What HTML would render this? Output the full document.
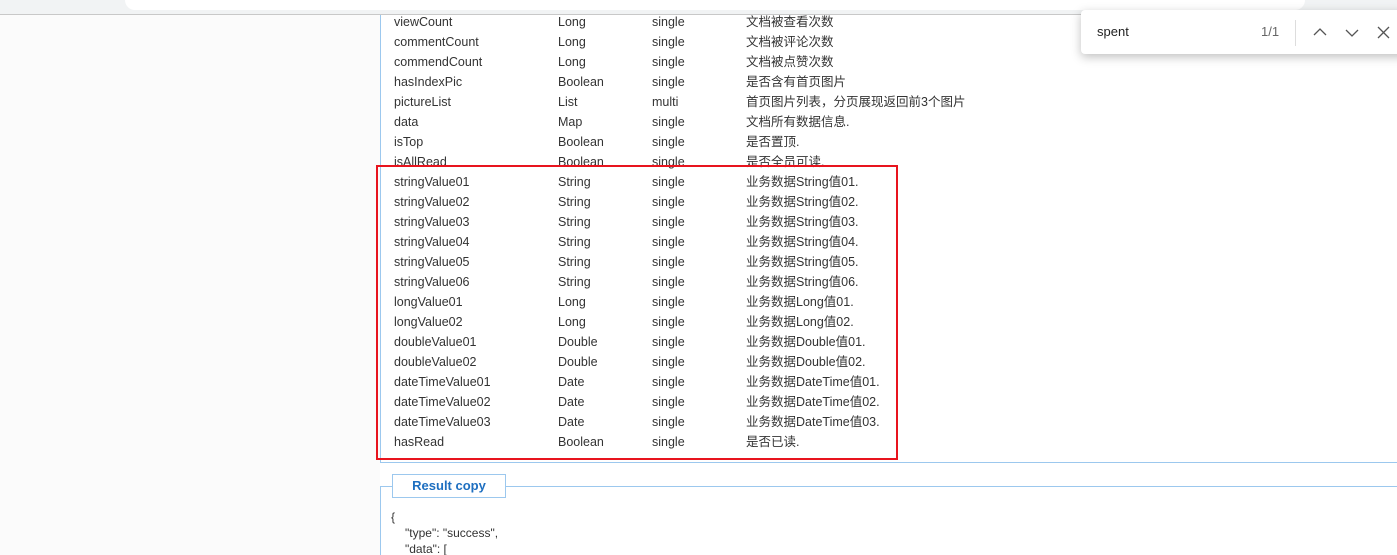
<!DOCTYPE html>
<html><head><meta charset="utf-8"><style>
html,body{margin:0;width:1397px;height:555px;overflow:hidden}
body{background:#fff;font-family:"Liberation Sans","Noto Sans CJK SC",sans-serif;font-size:12.5px;color:#333;position:relative}
.top{position:absolute;left:0;top:0;width:1397px;height:14px;background:#f1f3f4;border-bottom:1px solid #c8c8c8}
.addr{position:absolute;left:125px;top:-10px;width:1180px;height:20px;background:#fff;border-radius:10px}
.left{position:absolute;left:0;top:15px;width:380px;height:540px;background:#fbfbfb}
.panel{position:absolute;left:380px;top:15px;width:1017px;height:447px;border-left:1px solid #9cc8ee;border-bottom:1px solid #9cc8ee}
.row{position:absolute;height:20px;line-height:20px}
.row span{position:absolute;white-space:nowrap}
.red{position:absolute;left:376px;top:165px;width:518px;height:291px;border:2px solid #e8141e}
.res{position:absolute;left:380px;top:486px;width:1017px;height:69px;border-left:1px solid #9cc8ee;border-top:1px solid #9cc8ee}
.btn{position:absolute;left:392px;top:474px;width:112px;height:22px;border:1px solid #9cc8ee;background:#fff;color:#1e6fc0;font-weight:bold;text-align:center;line-height:22px;font-size:13px}
.json{position:absolute;left:391px;font-size:12px;color:#333}
.find{position:absolute;left:1081px;top:10px;width:330px;height:44px;background:#fff;border-radius:4px;box-shadow:0 3px 10px rgba(0,0,0,.25)}
</style></head><body>
<div class="top"><div class="addr"></div></div>
<div class="left"></div>
<div class="panel"></div>
<div id="rows"></div>
<div class="red"></div>
<div class="res"></div>
<div class="btn">Result copy</div>
<div class="json" style="top:510px">{</div>
<div class="json" style="top:526px;left:405px">"type": "success",</div>
<div class="json" style="top:542px;left:405px">"data": [</div>
<div class="find">
<span style="position:absolute;left:16px;top:14px;font-size:13px;color:#222">spent</span>
<span style="position:absolute;left:180px;top:14px;font-size:13px;color:#666">1/1</span>
<div style="position:absolute;left:214px;top:10px;width:1px;height:26px;background:#ddd"></div>
<svg style="position:absolute;left:230px;top:14px" width="90" height="16" viewBox="0 0 90 16" fill="none" stroke="#555" stroke-width="1.3"><path d="M3 11l6-6 6 6"/><path d="M35 6l6 6 6-6"/><path d="M67 3l11 11M78 3L67 14"/></svg>
</div>
<script>
var d=[["viewCount","Long","single","文档被查看次数"],["commentCount","Long","single","文档被评论次数"],["commendCount","Long","single","文档被点赞次数"],["hasIndexPic","Boolean","single","是否含有首页图片"],["pictureList","List","multi","首页图片列表，分页展现返回前3个图片"],["data","Map","single","文档所有数据信息."],["isTop","Boolean","single","是否置顶."],["isAllRead","Boolean","single","是否全员可读."],["stringValue01","String","single","业务数据String值01."],["stringValue02","String","single","业务数据String值02."],["stringValue03","String","single","业务数据String值03."],["stringValue04","String","single","业务数据String值04."],["stringValue05","String","single","业务数据String值05."],["stringValue06","String","single","业务数据String值06."],["longValue01","Long","single","业务数据Long值01."],["longValue02","Long","single","业务数据Long值02."],["doubleValue01","Double","single","业务数据Double值01."],["doubleValue02","Double","single","业务数据Double值02."],["dateTimeValue01","Date","single","业务数据DateTime值01."],["dateTimeValue02","Date","single","业务数据DateTime值02."],["dateTimeValue03","Date","single","业务数据DateTime值03."],["hasRead","Boolean","single","是否已读."]];
var h="",x=[394,558,652,746];
d.forEach(function(r,i){h+='<div class="row" style="top:'+(12+i*20)+'px;left:0">';r.forEach(function(c,j){h+='<span style="left:'+x[j]+'px">'+c+'</span>'});h+='</div>'});
document.getElementById("rows").innerHTML=h;
</script>
</body></html>
